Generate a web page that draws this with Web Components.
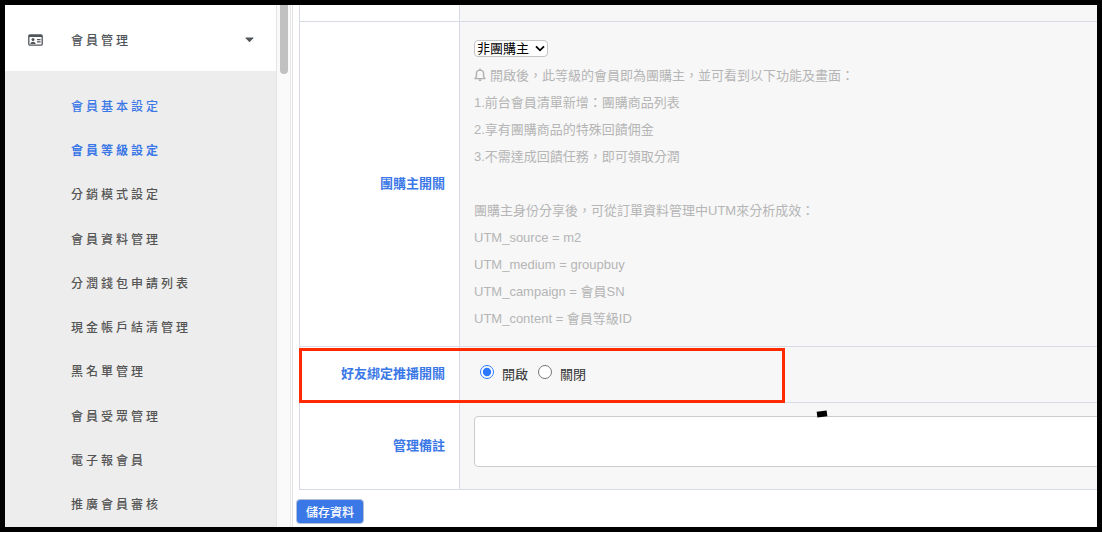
<!DOCTYPE html>
<html lang="zh-Hant">
<head>
<meta charset="utf-8">
<meta name="viewport" content="width=device-width, initial-scale=1">
<title>會員等級設定</title>
<style>
  body {
    margin: 0;
    background: #fff;
    color: #333;
    font-family: "Liberation Sans", "Noto Sans CJK TC", sans-serif;
    --blue: #3b78e7;
    --line: #d6dbe6;
  }
</style>
</head>
<body>
<admin-frame>
  <side-menu slot="side" heading="會員管理">
    <menu-entry active>會員基本設定</menu-entry>
    <menu-entry active current>會員等級設定</menu-entry>
    <menu-entry>分銷模式設定</menu-entry>
    <menu-entry>會員資料管理</menu-entry>
    <menu-entry>分潤錢包申請列表</menu-entry>
    <menu-entry>現金帳戶結清管理</menu-entry>
    <menu-entry>黑名單管理</menu-entry>
    <menu-entry>會員受眾管理</menu-entry>
    <menu-entry>電子報會員</menu-entry>
    <menu-entry>推廣會員審核</menu-entry>
  </side-menu>
  <level-form></level-form>
</admin-frame>

<script>
class ShadowElement extends HTMLElement {
  constructor() {
    super();
    this.attachShadow({ mode: "open" }).innerHTML = this.render();
  }
}

customElements.define("admin-frame", class extends ShadowElement {
  render() {
    return `<style>
      :host { display: flex; box-sizing: border-box; height: calc(100vh - 1px); border: 5px solid #000; overflow: hidden; }
      main { flex: 1; min-width: 0; margin-left: 1px; border-left: 1px solid #e2e2e4; overflow: hidden; }
    </style>
    <slot name="side"></slot><main><slot></slot></main>`;
  }
});

customElements.define("side-menu", class extends ShadowElement {
  render() {
    return `<style>
      :host { display: flex; flex: none; border-right: 1px solid #e8e8e8; }
      nav { display: flex; flex-direction: column; width: 271px; border-right: 1px solid #e4e4e4; }
      button { display: flex; align-items: center; flex: none; height: 66px; padding: 3px 22px 0 23px; border: 0; background: #fff;
        color: #50555a; font: 500 12px "Liberation Sans", "Noto Sans CJK TC", sans-serif; letter-spacing: 3px; text-align: left; }
      .label { flex: 1; margin-left: 28px; }
      .items { flex: 1; display: grid; grid-auto-rows: 1fr; padding: 12px 0 1px; background: #ededed; }
      .track { width: 13px; background: #fafafa; }
      .thumb { width: 8px; height: 69px; margin-left: 3px; border-radius: 0 0 4px 4px; background: #c1c1c1; }
    </style>
    <nav>
      <button type="button" aria-expanded="true">
        <svg width="15" height="12" viewBox="0 0 15 12" aria-hidden="true"><rect x=".8" y=".8" width="13.4" height="10.4" rx="1.2" fill="none" stroke="#50555a" stroke-width="1.3"/><path d="M1 1h13v2H1z" fill="#50555a"/><circle cx="5" cy="5.6" r="1.5" fill="#50555a"/><path d="M2.4 10c0-3 5.2-3 5.2 0zM9 5h3.6v1.2H9zM9 7.3h3.6v1.2H9z" fill="#50555a"/></svg>
        <span class="label"></span>
        <svg width="9" height="6" viewBox="0 0 9 6" aria-hidden="true"><path d="M.8.5h7.4q.6.2.1.8L5 4.8q-.5.4-1 0L.7 1.300Q.2.7.8.5z" fill="#50555a"/></svg>
      </button>
      <div class="items"><slot></slot></div>
    </nav>
    <div class="track"><div class="thumb"></div></div>`;
  }
  connectedCallback() {
    this.shadowRoot.querySelector(".label").textContent = this.getAttribute("heading");
  }
});

customElements.define("menu-entry", class extends ShadowElement {
  render() {
    return `<style>
      :host { display: flex; align-items: center; padding-left: 66px; }
      a { color: #555; font-size: 12px; font-weight: 500; letter-spacing: 3px; text-decoration: none; white-space: nowrap; }
      :host([active]) a { color: var(--blue); }
      :host([current]) a { font-weight: 700; }
    </style><a href="#"><slot></slot></a>`;
  }
});

customElements.define("pick-list", class extends ShadowElement {
  render() {
    return `<style>
      :host { display: inline-grid; align-items: center; vertical-align: middle; }
      select, svg { grid-area: 1 / 1; }
      select { appearance: none; box-sizing: border-box; width: 74px; height: 17px; padding: 0 16px 0 2px; border: 1px solid #c4c4c4; border-radius: 4px;
        background: #fff; color: #000; font: 13px/15px "Liberation Sans", "Noto Sans CJK TC", sans-serif; }
      svg { justify-self: end; margin-right: 3px; pointer-events: none; }
    </style>
    <select aria-label="團購主開關"><option>非團購主</option><option>團購主</option></select>
    <svg width="10" height="7" viewBox="0 0 10 7" aria-hidden="true"><path d="M1 1.300l4 4 4-4" fill="none" stroke="#000" stroke-width="1.8"/></svg>`;
  }
});

customElements.define("hint-text", class extends ShadowElement {
  render() {
    return `<style>
      :host { display: block; color: #b5b5b5; }
      p { margin: 0; min-height: 27px; white-space: nowrap; }
      svg { vertical-align: -2px; margin-right: 4px; }
    </style>
    <p><svg width="12" height="14" viewBox="0 0 12 14" aria-hidden="true"><path d="M1 10.600h10L9.600 8.600V5.500C9.600 3.500 8 2.100 6 2.100S2.400 3.500 2.400 5.500v3.100z" fill="none" stroke="#b0b0b0" stroke-width="1.4" stroke-linejoin="round"/><path d="M5.300.5h1.400v1.600H5.300zM4.300 11.600h3.400q-.3 1.700-1.700 1.700t-1.700-1.700z" fill="#b0b0b0"/></svg>開啟後，此等級的會員即為團購主，並可看到以下功能及畫面：</p>
    <p>1.前台會員清單新增：團購商品列表</p>
    <p>2.享有團購商品的特殊回饋佣金</p>
    <p>3.不需達成回饋任務，即可領取分潤</p>
    <p></p>
    <p>團購主身份分享後，可從訂單資料管理中UTM來分析成效：</p>
    <p>UTM_source = m2</p>
    <p>UTM_medium = groupbuy</p>
    <p>UTM_campaign = 會員SN</p>
    <p>UTM_content = 會員等級ID</p>`;
  }
});

customElements.define("toggle-choice", class extends ShadowElement {
  render() {
    return `<style>
      :host { display: flex; gap: 10px; padding-left: 6px; color: #333; }
      label { display: flex; align-items: center; gap: 8px; }
      input { width: 14px; height: 14px; margin: 0 0 6px; accent-color: #2a78ff; }
    </style>
    <label><input type="radio" name="push" checked>開啟</label>
    <label><input type="radio" name="push">關閉</label>`;
  }
});

customElements.define("level-form", class extends ShadowElement {
  render() {
    return `<style>
      :host { display: block; }
      table { width: calc(100% + 16px); margin-left: 6px; border-collapse: separate; border-spacing: 0; border-left: 1px solid var(--line); font-size: 13px; line-height: 27px; }
      th, td { border-bottom: 1px solid var(--line); }
      th { position: relative; box-sizing: border-box; width: 160px; padding: 0 14px 2px 0; border-right: 1px solid var(--line); color: var(--blue); text-align: right; font-weight: 700; }
      td { position: relative; padding: 14px; background: #f7f7f7; }
      .previous td { height: 16px; padding: 0; }
      .group td { padding-top: 13px; }
      .remark td { padding: 13px 14px 22px; }
      .first { height: 27px; display: flex; align-items: center; }
      textarea { display: block; box-sizing: border-box; width: 100%; height: 51px; border: 1px solid #ccc; border-radius: 4px; background: #fff; resize: none; font: inherit; }
      .mark { position: absolute; z-index: 1; top: 1px; left: -1px; width: 486px; height: 55px; box-sizing: border-box; border: 3px solid #ff2a00; pointer-events: none; }
      .speck { position: absolute; top: 8px; left: 357px; width: 10px; height: 6px; background: #000; rotate: -7deg; }
      button { display: block; height: 25px; margin: 9px 0 0 3px; padding: 0 9px; border: 1px solid #b4c0d8; border-radius: 4px; background: var(--blue); color: #fff;
        font: 500 12px "Liberation Sans", "Noto Sans CJK TC", sans-serif; }
    </style>
    <form>
      <table>
        <tr class="previous"><th></th><td></td></tr>
        <tr class="group"><th scope="row">團購主開關</th><td><div class="first"><pick-list></pick-list></div><hint-text></hint-text></td></tr>
        <tr><th scope="row">好友綁定推播開關<span class="mark"></span></th><td><toggle-choice></toggle-choice></td></tr>
        <tr class="remark"><th scope="row"><label for="remark">管理備註</label></th><td><textarea id="remark"></textarea><span class="speck"></span></td></tr>
      </table>
      <button type="button">儲存資料</button>
    </form>`;
  }
});
</script>
</body>
</html>
